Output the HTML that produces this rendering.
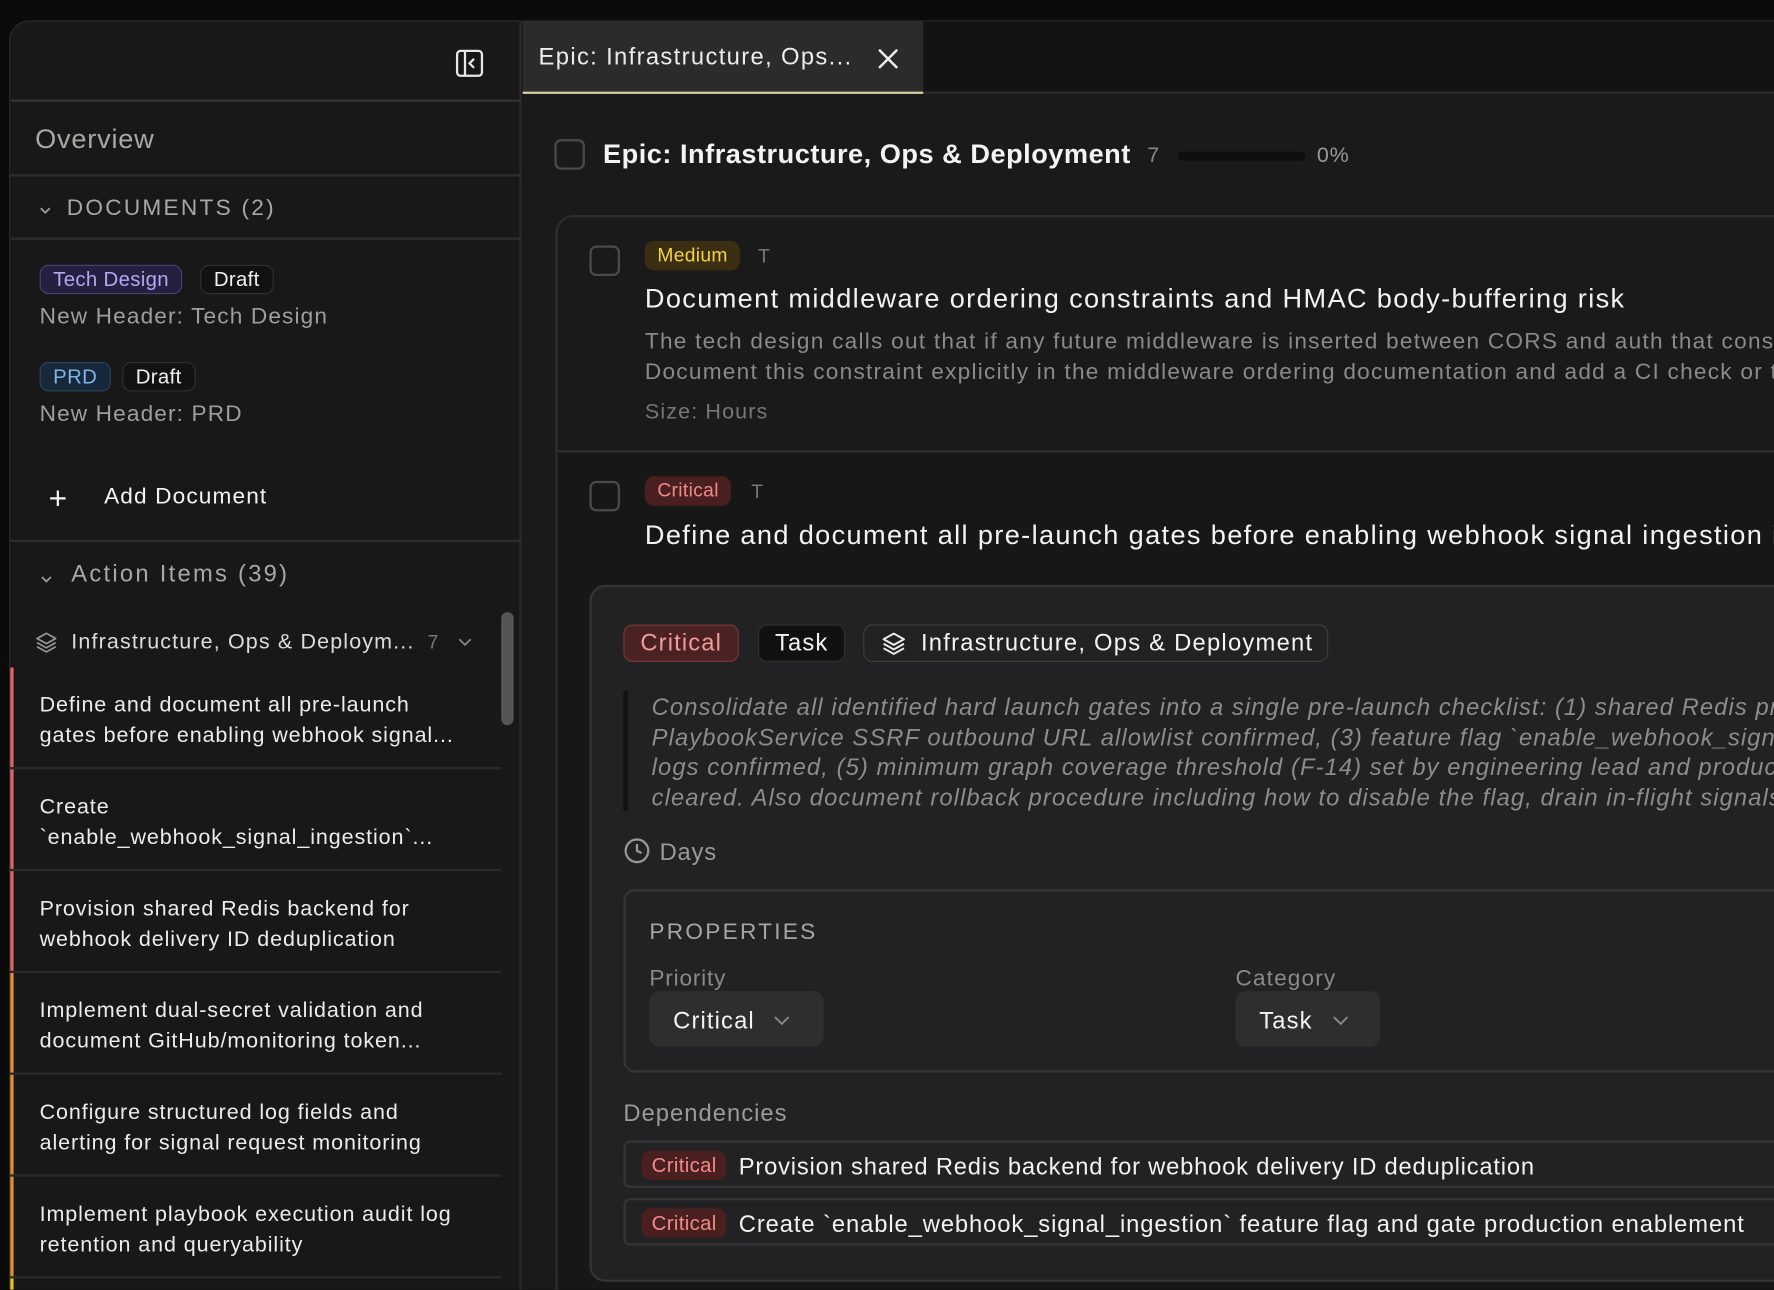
<!DOCTYPE html>
<html><head><meta charset="utf-8"><style>
*{box-sizing:border-box;margin:0;padding:0}
html,body{width:1774px;height:1290px;overflow:hidden;background:#0b0b0b}
body{font-family:"Liberation Sans",sans-serif;letter-spacing:0.7px}
#w{position:absolute;left:0;top:0;width:1568px;height:1140px;transform:scale(1.13138);transform-origin:0 0;overflow:hidden}
.a{position:absolute;white-space:nowrap;margin-top:2px}
.win{position:absolute;left:8px;top:18px;width:1560px;height:1122px;border:1px solid #2e2e2e;border-right:0;border-bottom:0;border-radius:18px 0 0 0;background:#181818;overflow:hidden}
.hl{position:absolute;height:2px;background:#2d2d2d}
.badge{position:absolute;border-radius:8px;font-size:18px;line-height:24px;padding:0 11px;border:1px solid;white-space:nowrap;letter-spacing:0.3px}
.li{position:absolute;left:0;width:434px;height:90px;border-bottom:2px solid #2a2a2a}
.li .bar{position:absolute;left:0;top:0;width:3px;height:100%}
.li .t{position:absolute;left:26px;top:20px;font-size:19px;line-height:27px;color:#ececec;white-space:nowrap;letter-spacing:0.8px}
.cb{position:absolute;width:27px;height:27px;border:2px solid #4a4a4a;border-radius:6px}
</style></head><body><div id="w">
<div class="win">
 <div style="position:absolute;left:0;top:0;width:452px;height:1200px;background:#181818;border-right:2px solid #2a2a2a"></div>
 <svg class="a" style="left:393px;top:22px" width="26" height="26" viewBox="0 0 26 26" fill="none" stroke="#e8e8e8" stroke-width="2"><rect x="2" y="2" width="22" height="22" rx="3"/><line x1="9" y1="2" x2="9" y2="24"/><path d="M17 9l-4 4 4 4"/></svg>
 <div class="hl" style="left:0;top:69px;width:452px;background:#333"></div>
 <div class="a" style="left:22px;top:89px;font-size:24px;color:#a8a8a4">Overview</div>
 <div class="hl" style="left:0;top:135px;width:452px"></div>
 <svg class="a" style="left:25px;top:160px" width="12" height="10" viewBox="0 0 12 10" fill="none" stroke="#999" stroke-width="1.6"><path d="M2 3l4 4 4-4"/></svg>
 <div class="a" style="left:50px;top:152px;font-size:20px;color:#a8a8a8;letter-spacing:2px">DOCUMENTS (2)</div>
 <div class="hl" style="left:0;top:191px;width:452px"></div>
 <div class="badge" style="left:26px;top:215px;background:#262040;border-color:#4a4272;color:#b3a6f2">Tech Design</div>
 <div class="badge" style="left:168px;top:215px;background:#121212;border-color:#303030;color:#f2f2f2">Draft</div>
 <div class="a" style="left:26px;top:248px;font-size:20px;color:#9e9e9e;letter-spacing:1px">New Header: Tech Design</div>
 <div class="badge" style="left:26px;top:301px;background:#17283a;border-color:#2a4560;color:#7fb4e8">PRD</div>
 <div class="badge" style="left:99px;top:301px;background:#121212;border-color:#303030;color:#f2f2f2">Draft</div>
 <div class="a" style="left:26px;top:334px;font-size:20px;color:#9e9e9e;letter-spacing:1px">New Header: PRD</div>
 <div class="a" style="left:34px;top:404px;font-size:28px;color:#f0f0f0;font-weight:300">+</div>
 <div class="a" style="left:83px;top:407px;font-size:20px;color:#f4f4f4;letter-spacing:1px">Add Document</div>
 <div class="hl" style="left:0;top:458px;width:452px"></div>
 <svg class="a" style="left:26px;top:486px" width="12" height="10" viewBox="0 0 12 10" fill="none" stroke="#999" stroke-width="1.6"><path d="M2 3l4 4 4-4"/></svg>
 <div class="a" style="left:54px;top:475px;font-size:21px;color:#a8a8a8;letter-spacing:2px">Action Items (39)</div>
 <svg class="a" style="left:21px;top:536px" width="22" height="22" viewBox="0 0 24 24" fill="none" stroke="#999" stroke-width="1.6" stroke-linejoin="round"><path d="M12 3l9 5-9 5-9-5z"/><path d="M3 12l9 5 9-5"/><path d="M3 16l9 5 9-5"/></svg>
 <div class="a" style="left:54px;top:536px;font-size:19px;color:#dcdcdc;letter-spacing:1px">Infrastructure, Ops &amp; Deploym...</div>
 <div class="a" style="left:369px;top:537px;font-size:17px;color:#777">7</div>
 <svg class="a" style="left:395px;top:541px" width="14" height="10" viewBox="0 0 14 10" fill="none" stroke="#888" stroke-width="1.6"><path d="M2 3l5 5 5-5"/></svg>
 <div style="position:absolute;left:434px;top:522px;width:11px;height:100px;border-radius:6px;background:#555"></div>
 <div class="li" style="top:571px"><div class="bar" style="background:#e06565"></div><div class="t">Define and document all pre-launch<br>gates before enabling webhook signal...</div></div>
 <div class="li" style="top:661px"><div class="bar" style="background:#e06565"></div><div class="t">Create<br>`enable_webhook_signal_ingestion`...</div></div>
 <div class="li" style="top:751px"><div class="bar" style="background:#e06565"></div><div class="t">Provision shared Redis backend for<br>webhook delivery ID deduplication</div></div>
 <div class="li" style="top:841px"><div class="bar" style="background:#e58d35"></div><div class="t">Implement dual-secret validation and<br>document GitHub/monitoring token...</div></div>
 <div class="li" style="top:931px"><div class="bar" style="background:#e58d35"></div><div class="t">Configure structured log fields and<br>alerting for signal request monitoring</div></div>
 <div class="li" style="top:1021px"><div class="bar" style="background:#e58d35"></div><div class="t">Implement playbook execution audit log<br>retention and queryability</div></div>
 <div class="li" style="top:1111px"><div class="bar" style="background:#e8c020"></div></div>

 <div style="position:absolute;left:453px;top:0;width:1200px;height:1200px;background:#1a1a1a"></div>
 <div style="position:absolute;left:453px;top:0;width:1200px;height:64px;background:#131313;border-bottom:2px solid #2a2a2a"></div>
 <div style="position:absolute;left:453px;top:0;width:354px;height:64px;background:#2b2b2b;border-bottom:2px solid #d6cca4"></div>
 <div class="a" style="left:467px;top:18px;font-size:21px;color:#ececec;letter-spacing:1.2px">Epic: Infrastructure, Ops...</div>
 <svg class="a" style="left:765px;top:20px" width="22" height="22" viewBox="0 0 22 22" stroke="#eee" stroke-width="2.2"><path d="M3 3l16 16M19 3L3 19"/></svg>
 <div class="cb" style="left:481px;top:104px"></div>
 <div class="a" style="left:524px;top:102px;font-size:24px;font-weight:bold;color:#f4f4f4;letter-spacing:0.45px">Epic: Infrastructure, Ops &amp; Deployment</div>
 <div class="a" style="left:1005px;top:106px;font-size:19px;color:#888">7</div>
 <div style="position:absolute;left:1032px;top:115px;width:113px;height:8px;border-radius:4px;background:#0e0e0e"></div>
 <div class="a" style="left:1155px;top:106px;font-size:19px;color:#999">0%</div>

 <div style="position:absolute;left:482px;top:171px;width:1200px;height:1100px;border:2px solid #2e2e2e;border-radius:16px;background:#1a1a1a;overflow:hidden">
  <div class="cb" style="left:28px;top:25px"></div>
  <div class="badge" style="left:77px;top:21px;background:#3b2e12;border-color:#3b2e12;color:#f2d340;font-size:17px;padding:0 10px">Medium</div>
  <div class="a" style="left:177px;top:23px;font-size:17px;color:#777">T</div>
  <div class="a" style="left:77px;top:57px;font-size:24px;color:#f2f2f2;letter-spacing:1.2px;font-weight:500">Document middleware ordering constraints and HMAC body-buffering risk</div>
  <div class="a" style="left:77px;top:95px;font-size:20px;line-height:27px;color:#8a8a8a;letter-spacing:1.1px">The tech design calls out that if any future middleware is inserted between CORS and auth that consumes the body<br>Document this constraint explicitly in the middleware ordering documentation and add a CI check or test to verify</div>
  <div class="a" style="left:77px;top:160px;font-size:19px;color:#777;letter-spacing:1px">Size: Hours</div>
  <div style="position:absolute;left:0;top:206px;width:1200px;height:2px;background:#2e2e2e"></div>
  <div style="position:absolute;left:0;top:208px;width:1200px;height:900px;background:#171717"></div>
  <div class="cb" style="left:28px;top:233px"></div>
  <div class="badge" style="left:77px;top:229px;background:#4a1f1f;border-color:#4a1f1f;color:#f08a8a;font-size:17px;padding:0 10px">Critical</div>
  <div class="a" style="left:171px;top:231px;font-size:17px;color:#777">T</div>
  <div class="a" style="left:77px;top:266px;font-size:24px;color:#f4f4f4;letter-spacing:1.2px">Define and document all pre-launch gates before enabling webhook signal ingestion in production</div>

  <div style="position:absolute;left:28px;top:325px;width:1200px;height:616px;background:#222224;border:2px solid #353535;border-radius:14px">
   <div class="badge" style="left:28px;top:33px;background:#4a2222;border-color:#7a3838;color:#f29a9a;font-size:21px;line-height:31px;padding:0 14px;letter-spacing:1px">Critical</div>
   <div class="badge" style="left:147px;top:33px;background:#111;border-color:#303030;color:#f4f4f4;font-size:21px;line-height:31px;padding:0 14px;letter-spacing:1px">Task</div>
   <div class="badge" style="left:240px;top:33px;background:#222;border-color:#3e3e3e;color:#f4f4f4;font-size:21px;line-height:31px;padding:0 14px 0 50px;width:411px;letter-spacing:1.1px">Infrastructure, Ops &amp; Deployment</div>
   <svg class="a" style="left:255px;top:36px" width="24" height="24" viewBox="0 0 24 24" fill="none" stroke="#eee" stroke-width="1.7" stroke-linejoin="round"><path d="M12 3l9 5-9 5-9-5z"/><path d="M3 12l9 5 9-5"/><path d="M3 16l9 5 9-5"/></svg>
   <div style="position:absolute;left:28px;top:92px;width:4px;height:106px;background:#111"></div>
   <div class="a" style="left:53px;top:92px;font-size:21px;line-height:26.5px;font-style:italic;color:#8c8c8c;letter-spacing:0.95px">Consolidate all identified hard launch gates into a single pre-launch checklist: (1) shared Redis provisioned and verified,<br>PlaybookService SSRF outbound URL allowlist confirmed, (3) feature flag `enable_webhook_signal_ingestion` created,<br>logs confirmed, (5) minimum graph coverage threshold (F-14) set by engineering lead and product owner, (6) security<br>cleared. Also document rollback procedure including how to disable the flag, drain in-flight signals, and revert.</div>
   <svg class="a" style="left:28px;top:219px" width="24" height="24" viewBox="0 0 24 24" fill="none" stroke="#999" stroke-width="2"><circle cx="12" cy="12" r="10"/><path d="M12 6v6l4 2"/></svg>
   <div class="a" style="left:60px;top:221px;font-size:21px;color:#9a9a9a">Days</div>
   <div style="position:absolute;left:28px;top:267px;width:1200px;height:162px;border:2px solid #353535;border-radius:10px">
    <div class="a" style="left:21px;top:23px;font-size:20px;letter-spacing:2px;color:#a6a6a6">PROPERTIES</div>
    <div class="a" style="left:21px;top:64px;font-size:20px;color:#8a8a8a">Priority</div>
    <div style="position:absolute;left:21px;top:88px;width:154px;height:49px;background:#2e2e2e;border-radius:9px"></div>
    <div class="a" style="left:42px;top:101px;font-size:21px;color:#f4f4f4;letter-spacing:1px">Critical</div>
    <svg class="a" style="left:130px;top:107px" width="16" height="10" viewBox="0 0 16 10" fill="none" stroke="#888" stroke-width="1.7"><path d="M2 2l6 6 6-6"/></svg>
    <div class="a" style="left:539px;top:64px;font-size:20px;color:#8a8a8a;letter-spacing:1px">Category</div>
    <div style="position:absolute;left:539px;top:88px;width:128px;height:49px;background:#2e2e2e;border-radius:9px"></div>
    <div class="a" style="left:560px;top:101px;font-size:21px;color:#f4f4f4;letter-spacing:1px">Task</div>
    <svg class="a" style="left:624px;top:107px" width="16" height="10" viewBox="0 0 16 10" fill="none" stroke="#888" stroke-width="1.7"><path d="M2 2l6 6 6-6"/></svg>
   </div>
   <div class="a" style="left:28px;top:452px;font-size:21px;color:#9a9a9a;letter-spacing:0.9px">Dependencies</div>
   <div style="position:absolute;left:28px;top:489px;width:1200px;height:42px;border:2px solid #353535;border-radius:6px"></div>
   <div class="badge" style="left:44px;top:498px;background:#4a1f1f;border-color:#4a1f1f;color:#ef8a8a;font-size:18px;padding:0 8px">Critical</div>
   <div class="a" style="left:130px;top:499px;font-size:21px;color:#f2f2f2;letter-spacing:0.7px">Provision shared Redis backend for webhook delivery ID deduplication</div>
   <div style="position:absolute;left:28px;top:540px;width:1200px;height:42px;border:2px solid #353535;border-radius:6px"></div>
   <div class="badge" style="left:44px;top:549px;background:#4a1f1f;border-color:#4a1f1f;color:#ef8a8a;font-size:18px;padding:0 8px">Critical</div>
   <div class="a" style="left:130px;top:550px;font-size:21px;color:#f2f2f2;letter-spacing:0.8px">Create `enable_webhook_signal_ingestion` feature flag and gate production enablement</div>
  </div>
 </div>
</div>
</div></body></html>
